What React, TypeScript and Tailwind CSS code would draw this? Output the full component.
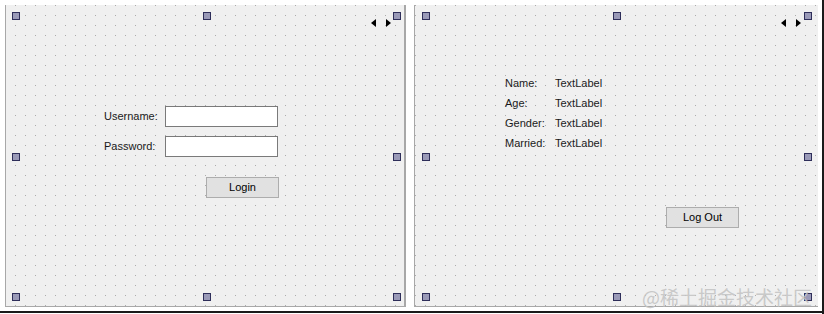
import React from 'react';

const dots =
    'bg-[#f0f0f0] bg-[radial-gradient(circle_at_0.5px_0.5px,#ababab_0.6px,transparent_0.9px)] bg-[length:10px_10px]';

const Handle: React.FC = () => <div className="w-[8px] h-[8px] border border-[#2e2e5a] bg-[#9a9ab8]" />;

// selection handles drawn over the form, like Designer does
const Handles: React.FC<{ className: string }> = ({ className }) => (
    <div className={`absolute inset-0 flex flex-col justify-between pointer-events-none ${className}`}>
        <div className="flex justify-between">
            <Handle />
            <Handle />
            <Handle />
        </div>
        <div className="flex justify-between">
            <Handle />
            <Handle />
        </div>
        <div className="flex justify-between">
            <Handle />
            <Handle />
            <Handle />
        </div>
    </div>
);

const Arrows: React.FC = () => (
    <div className="flex items-center gap-[10px]">
        <svg width="5" height="8" viewBox="0 0 5 8">
            <path d="M5 0 L0 4 L5 8 Z" fill="#000" />
        </svg>
        <svg width="5" height="8" viewBox="0 0 5 8">
            <path d="M0 0 L5 4 L0 8 Z" fill="#000" />
        </svg>
    </div>
);

const Button: React.FC<{ label: string }> = ({ label }) => (
    <div className="w-[73px] h-[21px] flex items-center justify-center bg-[#e1e1e1] border border-[#adadad] text-[11px] text-black">
        {label}
    </div>
);

const Field: React.FC = () => <div className="w-[113px] h-[21px] bg-white border border-[#7a7a7a]" />;

const LoginPanel: React.FC = () => (
    <div className={`relative w-[401px] h-[302px] border-l border-b border-r-2 border-[#a8a8a8] ${dots} bg-[position:9px_10px]`}>
        <div className="flex justify-end items-start pr-[13px] pt-[14px] h-[101px]">
            <Arrows />
        </div>
        <div className="pl-[98px] flex flex-col gap-[9px]">
            <div className="flex items-center">
                <span className="w-[61px]">Username:</span>
                <Field />
            </div>
            <div className="flex items-center">
                <span className="w-[61px]">Password:</span>
                <Field />
            </div>
            <div className="pl-[102px] pt-[11px]">
                <Button label="Login" />
            </div>
        </div>
        <Handles className="pl-[6px] pr-[3px] pt-[7px] pb-[5px]" />
    </div>
);

const rows = ['Name:', 'Age:', 'Gender:', 'Married:'];

const InfoPanel: React.FC = () => (
    <div className={`relative w-[404px] h-[302px] border-l border-b border-[#a8a8a8] ${dots} bg-[position:0px_10px]`}>
        <div className="flex justify-end items-start pr-[17px] pt-[14px] h-[68px]">
            <Arrows />
        </div>
        <div className="pl-[90px] flex flex-col">
            {rows.map((r) => (
                <div key={r} className="flex items-center h-[20px]">
                    <span className="w-[50px]">{r}</span>
                    <span>TextLabel</span>
                </div>
            ))}
        </div>
        <div className="pl-[251px] pt-[54px]">
            <Button label="Log Out" />
        </div>
        <Handles className="pl-[7px] pr-[6px] pt-[7px] pb-[5px]" />
    </div>
);

export default function App() {
    return (
        <div className="relative w-[824px] h-[314px] bg-white overflow-hidden text-[11px] text-[#1a1a1a] font-['Liberation_Sans',Arial,sans-serif]">
            <div className="flex gap-[8px] pl-[5px] pt-[5px]">
                <LoginPanel />
                <InfoPanel />
            </div>
            <div className="absolute left-0 right-0 bottom-[1px] h-[2px] bg-[#1a1a1a]" />
            <div className="absolute top-0 bottom-0 right-0 w-[2px] bg-[#1a1a1a]" />
            <div className="absolute right-[12px] top-[285px] text-[19px] leading-[24px] text-[#c4c4c4]/90 font-['Noto_Sans_CJK_SC',sans-serif]">
                @稀土掘金技术社区
            </div>
        </div>
    );
}
